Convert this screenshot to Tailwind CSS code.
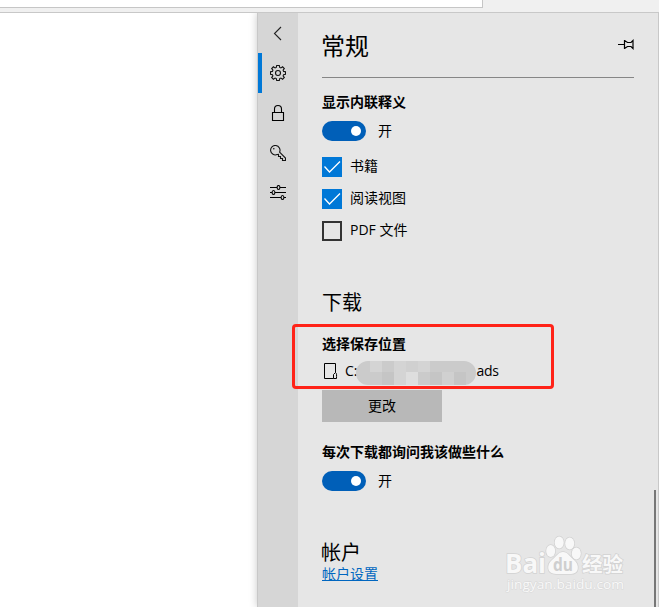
<!DOCTYPE html>
<html lang="zh-CN">
<head>
    <meta charset="UTF-8">
    <meta name="viewport" content="width=device-width, initial-scale=1.0">
    <title>常规</title>
    <script src="https://cdn.jsdelivr.net/npm/@tailwindcss/browser@4"></script>
</head>
<body class="h-[607px] w-[659px] overflow-hidden bg-white flex flex-col text-black text-[14px] leading-5 font-['Open_Sans','Noto_Sans_CJK_SC',sans-serif]">
    <header class="h-[13px] shrink-0 bg-[#f0f0f0] border-b border-[#c8c8c8]">
        <div class="w-[483px] h-2 bg-white border-r border-b border-[#c6c6c6]"></div>
    </header>

    <div class="flex flex-grow min-h-0">
        <main class="w-[257px] shrink-0 bg-white"></main>

        <aside class="relative flex flex-grow bg-[#e6e6e6] border-l border-r border-[#c8c8c8] shadow-[0_0_8px_rgba(0,0,0,0.22)] [clip-path:inset(0_0_0_-12px)]">
            <nav class="w-10 shrink-0 bg-[#d6d6d6] flex flex-col">
                <button class="h-10 flex items-center justify-center">
                    <svg width="16" height="16" viewBox="0 0 16 16" fill="none" stroke="#222" stroke-width="1.1"><path d="M11 2 4.5 8.500 11 15"/></svg>
                </button>
                <button class="h-10 flex items-center justify-center border-l-4 border-[#0078d7] pr-1">
                    <svg width="16" height="16" viewBox="0 0 16 16" fill="none" stroke="#111" stroke-width="1.1"><path d="M6.700 .5h2.600l.4 1.900 1.200.5L12.600 1.800l1.700 1.700-1.200 1.600.5 1.300 1.900.3v2.600l-1.900.4-.5 1.200 1.200 1.600-1.700 1.700-1.700-1.100-1.200.5-.4 1.900H6.700l-.4-1.900-1.200-.5-1.700 1.100-1.700-1.700 1.200-1.600-.5-1.200-1.900-.4V6.700l1.900-.3.5-1.300-1.200-1.600 1.700-1.700 1.700 1.100 1.200-.5z"/><circle cx="8" cy="8" r="2.500"/></svg>
                </button>
                <button class="h-10 flex items-center justify-center">
                    <svg width="16" height="18" viewBox="0 0 16 18" fill="none" stroke="#000" stroke-width="1.100"><path d="M2.500 8.500h11v8h-11zM4.500 8.500V5a3.500 3.500 0 0 1 7 0v3.500"/></svg>
                </button>
                <button class="h-10 flex items-center justify-center">
                    <svg width="16" height="16" viewBox="0 0 16 16" fill="none" stroke="#111" stroke-width="1.100"><path d="M9.600 7.100 15.500 13v2.500h-3v-2h-2v-2h-2V9.300l-1.300.2A4.700 4.700 0 1 1 9.600 7.100z"/><circle cx="3.800" cy="3.800" r=".8" fill="#111" stroke="none"/></svg>
                </button>
                <button class="h-10 flex items-center justify-center">
                    <svg width="16" height="16" viewBox="0 0 16 16" fill="none" stroke="#000" stroke-width="1.100"><path d="M0 2.500h7M10 2.500h6M0 7.500h2M5 7.500h11M0 12.500h11M14 12.500h2"/><ellipse cx="8.500" cy="2.500" rx="1.400" ry="2"/><ellipse cx="3.500" cy="7.500" rx="1.400" ry="2"/><ellipse cx="12.500" cy="12.500" rx="1.400" ry="2"/></svg>
                </button>
            </nav>

            <section class="flex-grow pl-6 pr-6">
                <div class="h-[65px] border-b border-[#868686] flex justify-between">
                    <h1 class="-ml-px text-[24px] leading-8 pt-[17px]">常规</h1>
                    <svg class="mt-[26px]" width="16" height="11" viewBox="0 0 16 11" fill="none" stroke="#000" stroke-width="1.200"><path d="M0 5.500h6M6.500 1v9M6.500 1.500 9.500 3.500h3.500l2-2v8L13 7.500H9.500L6.500 9.500"/></svg>
                </div>

                <h3 class="mt-3.5 font-bold">显示内联释义</h3>
                <div class="mt-[9px] flex items-center gap-3">
                    <span class="w-11 h-5 rounded-full bg-[#005fb8] flex items-center justify-end pr-[5px]"><i class="size-2.5 rounded-full bg-white"></i></span>
                    <span>开</span>
                </div>

                <div class="mt-4 flex flex-col gap-3">
                    <label class="flex h-5 gap-2">
                        <svg width="20" height="20" viewBox="0 0 20 20" fill="none" stroke="#fff" stroke-width="1.300"><path fill="#0078d7" stroke="none" d="M0 0h20v20H0z"/><path d="m2.500 9.500 5 5.500L18 4.500"/></svg>
                        <span class="-mt-px">书籍</span>
                    </label>
                    <label class="flex h-5 gap-2">
                        <svg width="20" height="20" viewBox="0 0 20 20" fill="none" stroke="#fff" stroke-width="1.300"><path fill="#0078d7" stroke="none" d="M0 0h20v20H0z"/><path d="m2.500 9.500 5 5.500L18 4.500"/></svg>
                        <span class="-mt-px">阅读视图</span>
                    </label>
                    <label class="flex h-5 gap-2">
                        <span class="size-5 border-2 border-[#333]"></span>
                        <span class="-mt-px">PDF 文件</span>
                    </label>
                </div>

                <h2 class="mt-[49px] text-[20px] leading-[26px]">下载</h2>
                <h3 class="mt-[18px] font-bold">选择保存位置</h3>
                <div class="mt-[7px] h-6 flex items-start">
                    <svg class="mt-0.5 ml-0.5 mr-[7px]" width="14" height="17" viewBox="0 0 14 17" fill="none" stroke="#000"><path d="M9.500 15.500h-9V.5h11v9M11.500 9.500c1.500 1 1 3 1 6h-3v-4z"/></svg>
                    <span>C:</span>
                    <!-- blurred part of the path -->
                    <svg class="-ml-0.5" width="120" height="24" viewBox="0 0 120 24">
                        <clipPath id="pill"><rect width="120" height="24" rx="12"/></clipPath>
                        <g clip-path="url(#pill)">
                            <path fill="#cbcbcb" d="M0 0h120v24H0z"/>
                            <path fill="#d4d4d4" d="M14 0h12v11H14zM38 0h12v11H38zM62 0h12v11H62zM38 11h12v13H38z"/>
                            <path fill="#c5c5c5" d="M26 11h12v13H26zM74 11h12v13H74zM98 11h12v13H98z"/>
                            <path fill="#dedede" d="M50 11h12v13H50z"/>
                            <path fill="#d0d0d0" d="M50 0h12v11H50zM86 11h12v13H86z"/>
                        </g>
                    </svg>
                    <span class="tracking-[-0.3px] ml-px">ads</span>
                </div>
                <button class="mt-[5px] w-[120px] h-8 bg-[#b8b8b8] block">更改</button>

                <h3 class="mt-5 font-bold">每次下载都询问我该做些什么</h3>
                <div class="mt-[9px] flex items-center gap-3">
                    <span class="w-11 h-5 rounded-full bg-[#005fb8] flex items-center justify-end pr-[5px]"><i class="size-2.5 rounded-full bg-white"></i></span>
                    <span>开</span>
                </div>

                <h2 class="mt-[49px] -ml-px text-[20px] leading-[26px]">帐户</h2>
                <a href="#" class="block w-14 -mt-px h-[16px] leading-[18px] text-[#0066c0] border-b border-[#0066c0]">帐户设置</a>
            </section>
        </aside>
    </div>

    <!-- highlight around the download location -->
    <div class="absolute left-[292px] top-[324px] w-[262px] h-[65px] border-3 border-[#ff2318] rounded-[4px]"></div>

    <div class="absolute left-[654px] top-[490px] w-0.5 h-[117px] bg-[#777]"></div>

    <!-- watermark -->
    <svg class="absolute left-[500px] top-[530px]" width="130" height="66" viewBox="0 0 130 66" fill="#f8f8f8" stroke="#d2d2d2" stroke-width="1.500" paint-order="stroke">
        <g font-family="Open Sans, Noto Sans CJK SC, sans-serif">
            <text x="5" y="43" font-size="26" font-weight="700" textLength="41" lengthAdjust="spacingAndGlyphs">Bai</text>
            <ellipse cx="50.700" cy="21" rx="4.500" ry="6"/>
            <ellipse cx="59.200" cy="12.500" rx="4.500" ry="6"/>
            <ellipse cx="69.700" cy="13.500" rx="4.500" ry="6"/>
            <ellipse cx="76.300" cy="23.500" rx="4.500" ry="6"/>
            <path d="M63 22c5 0 7 5 11 8 6 5 5 14-3 14H56c-9 0-10-9-4-14 4-3 6-8 11-8z"/>
            <text x="53" y="41" font-size="17" font-weight="700" fill="#cfcfcf" stroke="none" textLength="20" lengthAdjust="spacingAndGlyphs">du</text>
            <text x="82" y="42" font-size="20" font-weight="700" textLength="41" lengthAdjust="spacingAndGlyphs">经验</text>
            <text x="7" y="59" font-size="13" stroke="#d8d8d8" stroke-width="1" textLength="117" lengthAdjust="spacingAndGlyphs">jingyan.baidu.com</text>
        </g>
    </svg>
</body>
</html>
